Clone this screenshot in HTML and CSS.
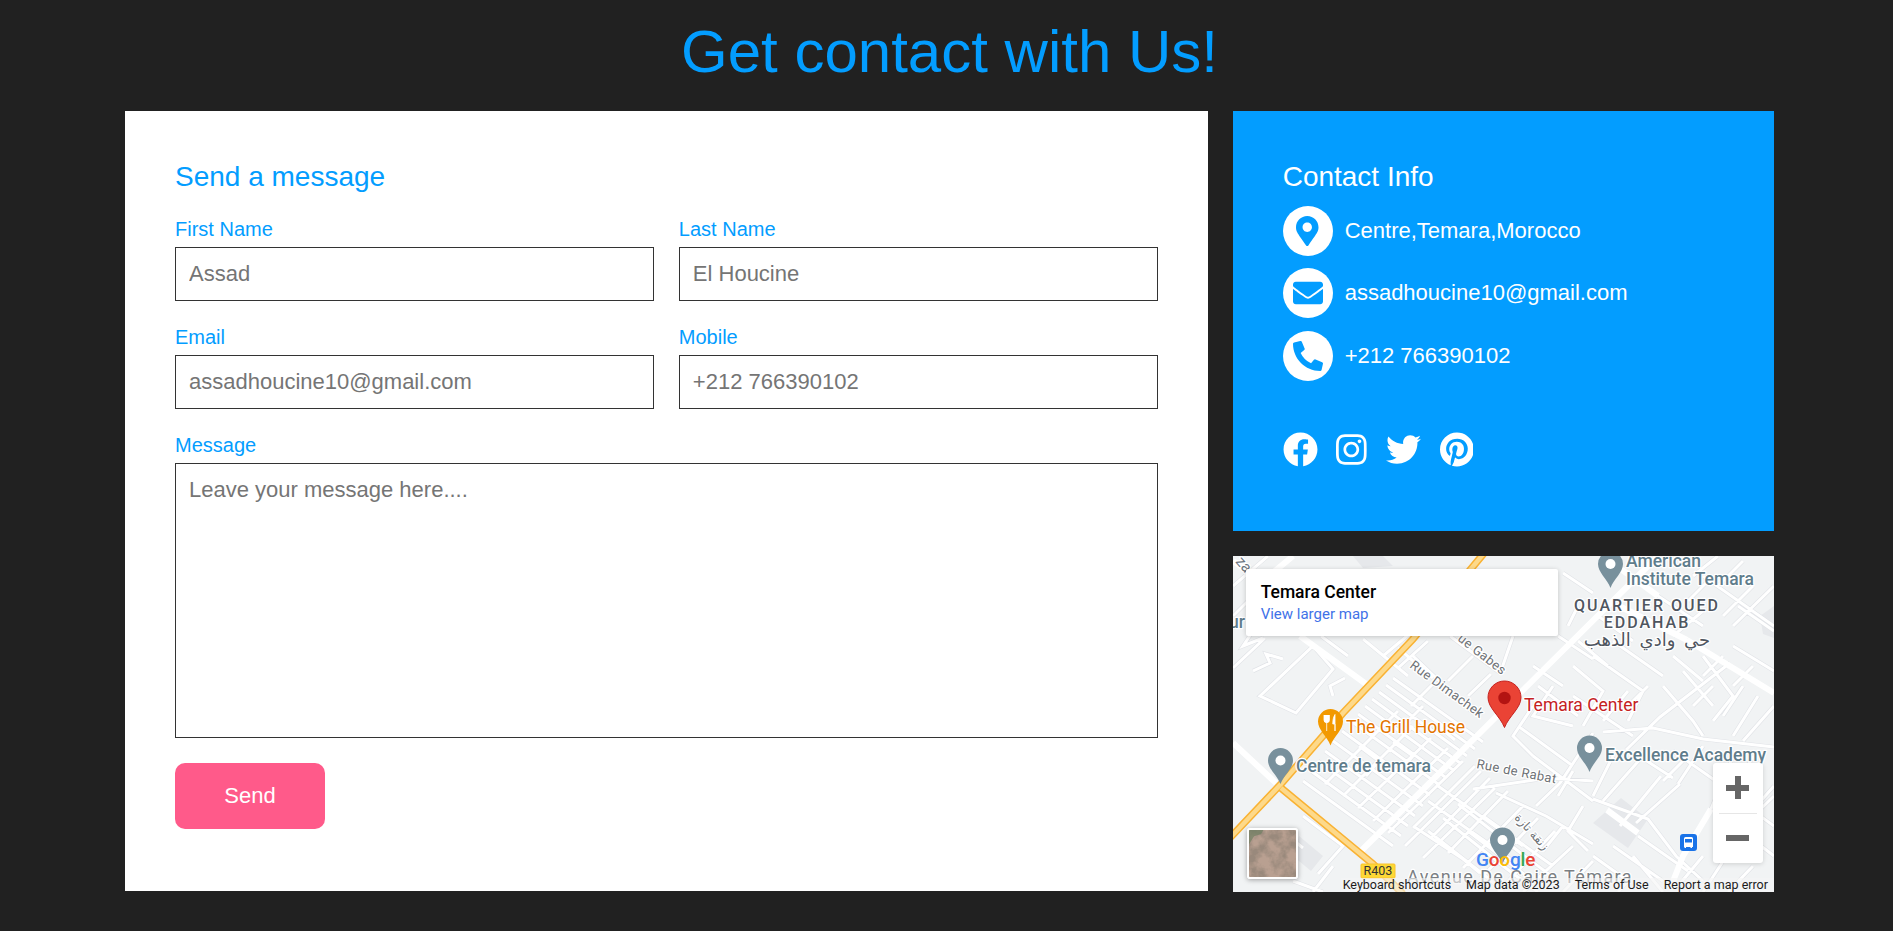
FILE: index.html
```html
<!DOCTYPE html>
<html lang="en">
<head>
<meta charset="utf-8">
<title>Contact</title>
<link rel="stylesheet" href="styles.css">
</head>
<body>
<main class="page">
  <h1 class="title">Get contact with Us!</h1>
  <div class="layout">
    <form class="form-panel">
      <h3 class="panel-title blue">Send a message</h3>
      <div class="fields">
        <div class="field"><label class="label">First Name</label><input class="input" placeholder="Assad"></div>
        <div class="field"><label class="label">Last Name</label><input class="input" placeholder="El Houcine"></div>
        <div class="field"><label class="label">Email</label><input class="input" placeholder="assadhoucine10@gmail.com"></div>
        <div class="field"><label class="label">Mobile</label><input class="input" placeholder="+212 766390102"></div>
        <div class="field wide"><label class="label">Message</label><textarea class="input area" placeholder="Leave your message here...."></textarea></div>
      </div>
      <button class="send" type="button">Send</button>
    </form>

    <div class="side">
      <section class="info">
        <h3 class="panel-title">Contact Info</h3>
        <ul class="info-list">
          <li class="info-row"><span class="circle"><svg class="ico" viewBox="0 0 384 512"><path d="M172.268 501.67C26.97 291.031 0 269.413 0 192 0 85.961 85.961 0 192 0s192 85.961 192 192c0 77.413-26.97 99.031-172.268 309.67-9.535 13.774-29.93 13.773-39.464 0zM192 272c44.183 0 80-35.817 80-80s-35.817-80-80-80-80 35.817-80 80 35.817 80 80 80z"/></svg></span>Centre,Temara,Morocco</li>
          <li class="info-row"><span class="circle"><svg class="ico" viewBox="0 0 512 512"><path d="M502.3 190.8c3.9-3.1 9.7-.2 9.7 4.7V400c0 26.5-21.5 48-48 48H48c-26.5 0-48-21.5-48-48V195.6c0-5 5.7-7.8 9.7-4.7 22.4 17.4 52.1 39.5 154.1 113.6 21.1 15.4 56.7 47.8 92.2 47.6 35.7.3 72-32.8 92.3-47.6 102-74.1 131.6-96.3 154-113.7zM256 320c23.2.4 56.6-29.2 73.4-41.4 132.7-96.3 142.8-104.7 173.4-128.7 5.8-4.5 9.2-11.5 9.2-18.9v-19c0-26.5-21.5-48-48-48H48C21.5 64 0 85.5 0 112v19c0 7.4 3.4 14.3 9.2 18.9 30.6 23.9 40.7 32.4 173.4 128.7 16.8 12.2 50.2 41.8 73.4 41.4z"/></svg></span>assadhoucine10@gmail.com</li>
          <li class="info-row"><span class="circle"><svg class="ico" viewBox="0 0 512 512"><path d="M18.6 24.6l104-24A24.16 24.16 0 0 1 150.1 14.5l48 112a23.94 23.94 0 0 1-6.9 28l-60.6 49.6a370.66 370.66 0 0 0 177.2 177.2l49.6-60.6a24 24 0 0 1 28-6.9l112 48a24.29 24.29 0 0 1 14 27.6l-24 104A24 24 0 0 1 464 512C207.9 512 0 304.5 0 48a24 24 0 0 1 18.6-23.4z"/></svg></span>+212 766390102</li>
        </ul>
        <div class="socials">
          <svg class="soc" viewBox="0 0 512 512"><path d="M504 256C504 119 393 8 256 8S8 119 8 256c0 123.78 90.69 226.38 209.25 245V327.69h-63V256h63v-54.64c0-62.15 37-96.48 93.67-96.48 27.14 0 55.52 4.84 55.52 4.84v61h-31.28c-30.8 0-40.41 19.12-40.41 38.73V256h68.78l-11 71.69h-57.78V501C413.31 482.38 504 379.78 504 256z"/></svg>
          <svg class="soc" viewBox="0 0 448 512"><path d="M224.1 141c-63.6 0-114.9 51.3-114.9 114.9s51.3 114.9 114.9 114.9S339 319.5 339 255.9 287.7 141 224.1 141zm0 189.6c-41.1 0-74.7-33.5-74.7-74.7s33.5-74.7 74.7-74.7 74.7 33.5 74.7 74.7-33.6 74.7-74.7 74.7zm146.4-194.3c0 14.9-12 26.8-26.8 26.8-14.9 0-26.8-12-26.8-26.8s12-26.8 26.8-26.8 26.8 12 26.8 26.8zm76.1 27.2c-1.7-35.9-9.9-67.7-36.2-93.9-26.2-26.2-58-34.4-93.9-36.2-37-2.1-147.9-2.1-184.9 0-35.8 1.7-67.6 9.9-93.9 36.1s-34.4 58-36.2 93.9c-2.1 37-2.1 147.9 0 184.9 1.7 35.9 9.9 67.7 36.2 93.9s58 34.4 93.9 36.2c37 2.1 147.9 2.1 184.9 0 35.9-1.7 67.7-9.9 93.9-36.2 26.2-26.2 34.4-58 36.2-93.9 2.1-37 2.1-147.8 0-184.8zM398.8 388c-7.8 19.6-22.9 34.7-42.6 42.6-29.5 11.7-99.5 9-132.1 9s-102.7 2.6-132.1-9c-19.6-7.8-34.7-22.9-42.6-42.6-11.7-29.5-9-99.5-9-132.1s-2.6-102.7 9-132.1c7.8-19.6 22.9-34.7 42.6-42.6 29.5-11.7 99.5-9 132.1-9s102.7-2.6 132.1 9c19.6 7.8 34.7 22.9 42.6 42.6 11.7 29.5 9 99.5 9 132.1s2.7 102.7-9 132.1z"/></svg>
          <svg class="soc" viewBox="0 0 512 512"><path d="M459.37 151.716c.325 4.548.325 9.097.325 13.645 0 138.72-105.583 298.558-298.558 298.558-59.452 0-114.68-17.219-161.137-47.106 8.447.974 16.568 1.299 25.34 1.299 49.055 0 94.213-16.568 130.274-44.832-46.132-.975-84.792-31.188-98.112-72.772 6.498.974 12.995 1.624 19.818 1.624 9.421 0 18.843-1.3 27.614-3.573-48.081-9.747-84.143-51.98-84.143-102.985v-1.299c13.969 7.797 30.214 12.67 47.431 13.319-28.264-18.843-46.781-51.005-46.781-87.391 0-19.492 5.197-37.36 14.294-52.954 51.655 63.675 129.3 105.258 216.365 109.807-1.624-7.797-2.599-15.918-2.599-24.04 0-57.828 46.782-104.934 104.934-104.934 30.213 0 57.502 12.67 76.67 33.137 23.715-4.548 46.456-13.32 66.599-25.34-7.798 24.366-24.366 44.833-46.132 57.827 21.117-2.273 41.584-8.122 60.426-16.243-14.292 20.791-32.161 39.308-52.628 54.253z"/></svg>
          <svg class="soc" viewBox="0 0 496 512"><path d="M496 256c0 137-111 248-248 248-25.6 0-50.2-3.9-73.4-11.1 10.1-16.5 25.2-43.5 30.8-65 3-11.6 15.4-59 15.4-59 8.1 15.4 31.7 28.5 56.8 28.5 74.8 0 128.7-68.8 128.7-154.3 0-81.9-66.9-143.2-152.9-143.2-107 0-163.9 71.8-163.9 150.1 0 36.4 19.4 81.7 50.3 96.1 4.7 2.2 7.2 1.2 8.3-3.3.8-3.4 5-20.3 6.9-28.1.6-2.5.3-4.7-1.7-7.1-10.1-12.5-18.3-35.3-18.3-56.6 0-54.7 41.4-107.6 112-107.6 60.9 0 103.6 41.5 103.6 100.9 0 67.1-33.9 113.6-78 113.6-24.3 0-42.6-20.1-36.7-44.8 7-29.5 20.5-61.3 20.5-82.6 0-19-10.2-34.9-31.4-34.9-24.9 0-44.9 25.7-44.9 60.2 0 22 7.4 36.8 7.4 36.8s-24.5 103.8-29 123.2c-5 21.4-3 51.6-.9 71.2C65.4 450.9 0 361.1 0 256 0 119 111 8 248 8s248 111 248 248z"/></svg>
        </div>
      </section>

      <section class="map">
        <svg class="map-art" viewBox="0 0 541 336" width="541" height="336">
          <defs>
            <path id="minor" d="M0 112L32 82M20 115L37 107L33 98L50 103M27 140L80 90L100 113L63 157ZM100 140L97 130L112 122M88 80L115 100M130 83L175 120M0 30L35 0M0 60L25 35L40 50M20 75L10 90L30 82
            M180 100L240 157M217 80L267 117M280 80L268 115M325 80L360 103M330 17L360 37M345 50L335 70M165 92L200 122M150 100L180 75M165 112L195 85M240 100L215 125M258 118L235 140M200 128L178 150
            M118 165L205 228M132 150L220 214M146 136L234 200M160 122L250 186M100 185L190 250M85 205L175 270M70 225L160 290
            M125 158L212 221M139 143L227 207M153 129L242 193M109 175L197 239M92 195L182 260M78 215L168 280
            M110 240L180 170M125 252L198 182M140 265L215 192M155 277L230 205M172 290L248 215M92 228L165 155M190 302L262 232
            M126 190L146 205L133 220M160 186L180 200L168 214M205 170L222 184M190 150L172 168M70 260L110 290L85 318M35 300L60 320M55 280L70 292M100 310L80 336M60 325L90 336
            M263 237L313 260L360 288M180 270L230 303L247 317M360 177L327 227L303 250M240 233L315 222L360 225M225 248L285 295L325 325M210 262L270 310L305 336M195 275L255 322L270 336M242 210L180 272M257 222L197 283M275 235L215 297M290 250L230 312M305 262L248 322M322 275L265 336M340 290L290 336M360 305L330 336
            M205 230L290 290M195 245L280 305M300 200L360 245M285 170L340 210M250 260L320 310M235 275L300 325
            M300 150L280 180L300 200M320 130L300 160L340 170M340 110L370 135L350 170M300 110L330 130M360 100L410 135L395 165M380 85L430 120M410 60L455 85M425 40L470 70M460 20L485 0M485 30L510 5M440 80L470 55M490 60L520 30M455 45L480 20M500 70L541 30M395 135L370 165M415 130L390 155M370 176L420 172L470 183L541 191M497 107L427 161L393 194M430 130L460 165L470 180M450 115L480 150M470 100L500 140L480 165M510 130L490 160M525 140L500 180M541 150L510 185M480 130L460 150
            M340 140L400 180M305 130L345 160M365 60L400 85M395 20L440 50M345 85L375 110M440 100L470 125M500 90L541 115M505 50L541 75M470 20L541 70M490 100L470 120M520 110L500 130
            M360 243L415 263L443 300L470 325M428 220L387 270M447 228L403 267M380 200L360 240M340 215L325 240M400 196L440 222M440 195L490 230M470 190L445 228M500 200L478 253M520 200L500 240L541 270M541 230L510 265M480 253L541 300M500 290L470 336M520 310L495 336M360 300L395 325L385 336M380 290L430 325M405 280L455 315M350 250L335 275L355 295M330 270L310 295
            M410 200L370 245M455 200L430 225M505 275L541 240M470 300L445 330M400 300L430 336"/>
            <filter id="sat" x="0" y="0" width="100%" height="100%">
              <feTurbulence type="fractalNoise" baseFrequency="0.08" numOctaves="4" seed="7"/>
              <feColorMatrix values="0 0 0 0 0.32  0 0 0 0 0.25  0 0 0 0 0.2  3.2 0 0 0 -1.2"/>
            </filter>
          </defs>

          <rect class="land" width="541" height="336"/>
          <path class="bldg" d="M120 0L150 0L160 10L130 12ZM66 280L90 300L78 315L60 300ZM388 242L415 263L395 292L360 267ZM527 60L541 50L541 82L530 78Z"/>
          <use href="#minor" class="edge"/>
          <use href="#minor" class="street"/>
          <path class="avenue" d="M67 80L133 128M0 187L43 227M425 0L125 298M454 84L541 137M386 50L454 84M478 253L450 300L437 333M0 5L30 25L60 0M370 0L425 40M374 254L405 277"/>
          <path class="hw-edge" d="M252 -4L180 83L110 157L48 228L-6 285M48 232L140 308L170 338"/>
          <path class="hw-fill" d="M252 -4L180 83L110 157L48 228L-6 285M48 232L140 308L170 338"/>

          <g class="lbl-road">
            <text transform="translate(224 84) rotate(38)">ue Gabes</text>
            <text transform="translate(176 111) rotate(36)">Rue Dimachek</text>
            <text transform="translate(243 212) rotate(11)">Rue de Rabat</text>
            <text class="ar" transform="translate(281 262) rotate(48)">زنقة تازة</text>
          </g>
          <text class="lbl-ave" x="174" y="327">Avenue De Caire Témara</text>
          <text class="lbl-za" transform="translate(2 6) rotate(48)">za</text>
          <text class="lbl-slate" x="-4" y="72">ur</text>

          <rect class="shield" x="128" y="308" width="34" height="14" rx="1"/>
          <text class="shield-t" x="145" y="319">R403</text>

          <g class="lbl-slate">
            <text x="63" y="216">Centre de temara</text>
            <text x="372" y="205">Excellence Academy</text>
            <text x="393" y="11">American</text>
            <text x="393" y="29">Institute Temara</text>
          </g>
          <text class="lbl-food" x="113" y="177">The Grill House</text>
          <text class="lbl-red" x="291" y="155">Temara Center</text>
          <g class="lbl-area">
            <text x="414" y="55">QUARTIER OUED</text>
            <text x="414" y="72">EDDAHAB</text>
            <text class="ar-area" x="414" y="90">حي وادي الذهب</text>
          </g>

          <g class="pin-slate">
            <path d="M35 204.5a12.5 12.5 0 0 1 25 0C60 213 51 219 47.5 228C44 219 35 213 35 204.5Z"/>
            <path d="M344 192a12.5 12.5 0 0 1 25 0C369 200.500 360 206.500 356.500 216C353 206.500 344 200.500 344 192Z"/>
            <path d="M365 8a12.500 12.500 0 0 1 25 0C390 16.500 381 22.500 377.500 32C374 22.500 365 16.500 365 8Z"/>
            <path d="M257 284a12.500 12.500 0 0 1 25 0C282 292.500 273 298.500 269.500 308C266 298.500 257 292.500 257 284Z"/>
          </g>
          <g class="pin-hole">
            <circle cx="47.500" cy="204.500" r="5"/>
            <circle cx="356.500" cy="192" r="5"/>
            <circle cx="377.500" cy="8" r="5"/>
            <circle cx="269.500" cy="284" r="5"/>
          </g>
          <path class="pin-food" d="M85 165.500a12.500 12.500 0 0 1 25 0C110 174 101 180 97.500 189.500C94 180 85 174 85 165.500Z"/>
          <path class="fork" d="M91 159v5a2.700 2.700 0 0 0 5.400 0v-5M93.700 159v16M102 175v-7h-2.200c0-4 .6-7 2.200-9.500Z"/>
          <path class="pin-red" d="M255 141.500a16.500 16.500 0 0 1 33 0C288 152 276 160 271.500 171.500C267 160 255 152 255 141.500Z"/>
          <circle class="pin-red-dot" cx="271.500" cy="142" r="6.200"/>

          <rect class="bus" x="447" y="278" width="17" height="17" rx="3"/>
          <path class="bus-i" d="M451 282.500q0-1.500 1.500-1.500h6q1.500 0 1.500 1.500v8.500h-1v1h-1.500v-1h-4.500v1h-1.500v-1h-.5Z"/>
          <path class="bus-w" d="M452 283h7v3.500h-7Z"/>

          <text class="logo" x="243" y="310"><tspan class="g-b">G</tspan><tspan class="g-r">o</tspan><tspan class="g-y">o</tspan><tspan class="g-b">g</tspan><tspan class="g-g">l</tspan><tspan class="g-r">e</tspan></text>
        </svg>

        <div class="map-card">
          <div class="map-card-name">Temara Center</div>
          <a class="map-card-link">View larger map</a>
        </div>

        <div class="thumb">
          <svg class="thumb-art" viewBox="0 0 46 46">
            <rect width="46" height="46" class="thumb-base"/>
            <rect width="46" height="46" filter="url(#sat)"/>
            <path class="thumb-green" d="M0 0H14L12 4L5 6L0 14Z"/>
          </svg>
        </div>

        <div class="zoom">
          <span class="zoom-btn"><span class="plus"></span></span>
          <span class="zoom-sep"></span>
          <span class="zoom-btn"><span class="minus"></span></span>
        </div>

        <div class="map-foot">
          <span>Keyboard shortcuts</span><span>Map data ©2023</span><span>Terms of Use</span><span>Report a map error</span>
        </div>
      </section>
    </div>
  </div>
</main>
</body>
</html>
```

FILE: styles.css
```css
* { box-sizing: border-box; }
html, body { margin: 0; height: 100%; }
body {
  background: #212121;
  font-family: "Liberation Sans", Arial, sans-serif;
  overflow: hidden;
}
.page { padding: 0 119px 0 125px; }
.title {
  margin: 0;
  padding: 17px 0 25px;
  font-size: 60px;
  font-weight: 400;
  line-height: 69px;
  text-align: center;
  color: #039dff;
}
.layout {
  display: grid;
  grid-template-columns: 2fr 1fr;
  column-gap: 25px;
  align-items: start;
}
.form-panel {
  background: #fff;
  padding: 50px 50px 62px;
}
.panel-title {
  margin: 0;
  font-size: 28px;
  font-weight: 400;
  line-height: 32px;
  color: #fff;
}
.panel-title.blue { color: #039dff; margin-bottom: 25px; }
.fields {
  display: grid;
  grid-template-columns: 1fr 1fr;
  gap: 25px;
}
.field { display: flex; flex-direction: column; min-width: 0; }
.field.wide { grid-column: 1 / -1; }
.label {
  font-size: 20px;
  line-height: 23px;
  margin-bottom: 6px;
  color: #039dff;
}
.input {
  display: block;
  width: 100%;
  height: 54px;
  padding: 0 13px;
  border: 1px solid #333;
  border-radius: 0;
  outline: 0;
  background: #fff;
  font: 22px "Liberation Sans", Arial, sans-serif;
}
.input::placeholder { color: #757575; opacity: 1; }
.area { height: 275px; padding: 13px; resize: none; }
.send {
  display: block;
  width: 150px;
  height: 66px;
  margin-top: 25px;
  border: 0;
  border-radius: 10px;
  background: #ff5a8a;
  color: #fff;
  font: 22px "Liberation Sans", Arial, sans-serif;
}
.side { display: flex; flex-direction: column; gap: 25px; }
.info {
  height: 420px;
  padding: 50px;
  background: #039dff;
  color: #fff;
}
.info-list {
  list-style: none;
  margin: 13px 0 0;
  padding: 0;
  display: flex;
  flex-direction: column;
  gap: 12.4px;
}
.info-row {
  display: flex;
  align-items: center;
  gap: 12px;
  font-size: 22px;
}
.circle {
  flex: none;
  width: 50px;
  height: 50px;
  border-radius: 50%;
  background: #fff;
  display: flex;
  align-items: center;
  justify-content: center;
}
.ico { height: 30px; fill: #039dff; display: block; }
.socials {
  display: flex;
  gap: 18.75px;
  margin-top: 51.2px;
}
.soc { height: 35px; fill: #fff; display: block; }

.map {
  position: relative;
  height: 336px;
  overflow: hidden;
  background: #f1f3f4;
}
.map-art { display: block; }
.land { fill: #f1f3f4; }
.bldg { fill: #e6e8eb; }
.edge { fill: none; stroke: #e1e3e7; stroke-width: 4.2px; }
.street { fill: none; stroke: #fff; stroke-width: 3px; }
.avenue { fill: none; stroke: #fff; stroke-width: 6px; }
.hw-edge { fill: none; stroke: #f9b233; stroke-width: 7.5px; }
.hw-fill { fill: none; stroke: #fdd98a; stroke-width: 4.5px; }

.map-art text { font-family: Roboto, sans-serif; paint-order: stroke; stroke: #fff; stroke-width: 2.5px; stroke-linejoin: round; }
.lbl-road text { font-size: 13px; fill: #6e7276; letter-spacing: .4px; }
.lbl-road .ar { font-family: "DejaVu Sans", sans-serif; font-size: 12px; letter-spacing: 0; }
.lbl-ave { font-size: 18px; fill: #7b7f84; letter-spacing: 1.4px; }
.lbl-za { font-size: 15px; fill: #6b7580; }
.lbl-slate text, text.lbl-slate { font-size: 17.5px; font-weight: 500; fill: #5f7d8c; }
.lbl-food { font-size: 17.5px; fill: #e37400; }
.lbl-red { font-size: 17.5px; fill: #c5221f; }
.lbl-area text { font-size: 16px; font-weight: 500; fill: #4f5660; text-anchor: middle; letter-spacing: 2px; }
.lbl-area .ar-area { font-family: "DejaVu Sans", sans-serif; font-weight: 400; font-size: 18px; letter-spacing: 0; word-spacing: 3px; }
.shield { fill: #fdd835; stroke: #f9c22e; }
.map-art .shield-t { font-size: 12.5px; fill: #333; text-anchor: middle; stroke: none; }
.pin-slate { fill: #78909c; }
.pin-hole { fill: #fff; }
.pin-food { fill: #f29900; }
.fork { fill: #fff; stroke: #fff; stroke-width: .8px; }
.pin-red { fill: #ea4335; stroke: #c5221f; stroke-width: 1px; }
.pin-red-dot { fill: #b31412; }
.bus { fill: #1a73e8; }
.bus-i { fill: #fff; }
.bus-w { fill: #1a73e8; }
.map-art .logo { font-size: 19px; font-weight: 500; font-family: Roboto, sans-serif; stroke: none; letter-spacing: -.2px; }
.g-b { fill: #4285f4; }
.g-r { fill: #ea4335; }
.g-y { fill: #fbbc05; }
.g-g { fill: #34a853; }

.map-card {
  position: absolute;
  left: 13px;
  top: 13px;
  width: 312px;
  height: 67px;
  padding: 12px 15px;
  border-radius: 2px;
  background: #fff;
  box-shadow: 0 1px 5px rgba(0, 0, 0, .2);
  font-family: Roboto, sans-serif;
}
.map-card-name { font-size: 17.5px; font-weight: 500; line-height: 22px; color: #000; }
.map-card-link { display: block; margin-top: 2px; font-size: 15px; line-height: 19px; color: #3f72e8; }
.thumb {
  position: absolute;
  left: 14px;
  top: 272px;
  width: 51px;
  height: 51px;
  border: 2.5px solid #fff;
  border-radius: 3px;
  box-shadow: 0 1px 5px rgba(0, 0, 0, .35);
  overflow: hidden;
}
.thumb-art { display: block; width: 100%; height: 100%; }
.thumb-base { fill: #b9a091; }
.thumb-green { fill: #6f7f63; opacity: .7; }
.zoom {
  position: absolute;
  left: 480px;
  top: 207px;
  width: 50px;
  height: 100px;
  padding: 0 6px;
  border-radius: 3px;
  background: #fff;
  box-shadow: 0 1px 5px rgba(0, 0, 0, .15);
  display: flex;
  flex-direction: column;
}
.zoom-btn { flex: 1; display: flex; align-items: center; justify-content: center; }
.zoom-sep { height: 1px; background: #e6e6e6; }
.plus, .minus { display: block; position: relative; width: 23px; height: 6px; background: #666; }
.plus::after {
  content: "";
  position: absolute;
  left: 8.5px;
  top: -8.5px;
  width: 6px;
  height: 23px;
  background: #666;
}
.map-foot {
  position: absolute;
  right: 0;
  bottom: 0;
  left: 108px;
  height: 14px;
  padding: 0 6px 0 2px;
  display: flex;
  justify-content: space-between;
  background: rgba(245, 245, 245, .6);
  font: 12.5px/14px Roboto, sans-serif;
  color: #1c1c1c;
  white-space: nowrap;
}
```
